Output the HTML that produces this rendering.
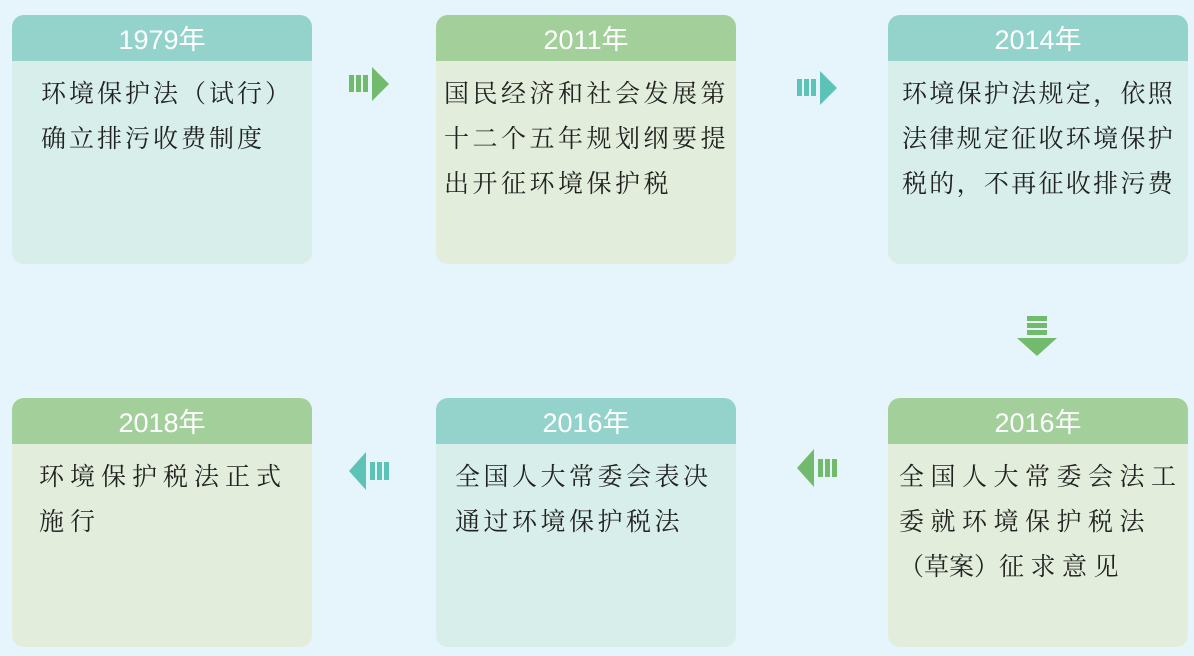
<!DOCTYPE html>
<html><head><meta charset="utf-8"><style>
body{margin:0;width:1194px;height:656px;background:#e6f4fb;position:relative;overflow:hidden;font-family:"Liberation Sans","Noto Sans CJK SC",sans-serif}
.box{position:absolute;width:300px;height:249px;border-radius:12px;overflow:hidden}
.h{height:46px;line-height:50px;text-align:center;color:#fff;font-size:27px}
.b{padding:11px 0 0 29px;font-family:"Liberation Serif","Noto Serif CJK SC",serif;font-size:25px;line-height:45px;color:#222;letter-spacing:3px}
.t .h{background:#93d3cb}.t{background:#d7eeea}
.g .h{background:#a3cf9b}.g{background:#e2eedb}
svg{position:absolute}
</style></head><body>
<div class="box t" style="left:12px;top:15px"><div class="h">1979年</div><div class="b">环境保护法（试行）<br>确立排污收费制度</div></div>
<div class="box g" style="left:436px;top:15px"><div class="h">2011年</div><div class="b" style="padding-left:8px;letter-spacing:3.5px">国民经济和社会发展第<br>十二个五年规划纲要提<br>出开征环境保护税</div></div>
<div class="box t" style="left:888px;top:15px"><div class="h">2014年</div><div class="b" style="padding-left:14px;letter-spacing:2.3px">环境保护法规定，依照<br>法律规定征收环境保护<br>税的，不再征收排污费</div></div>
<div class="box g" style="left:12px;top:398px"><div class="h">2018年</div><div class="b" style="padding-left:27px;letter-spacing:6px">环境保护税法正式<br>施行</div></div>
<div class="box t" style="left:436px;top:398px"><div class="h">2016年</div><div class="b" style="padding-left:19px;letter-spacing:3.5px">全国人大常委会表决<br>通过环境保护税法</div></div>
<div class="box g" style="left:888px;top:398px"><div class="h">2016年</div><div class="b" style="padding-left:11px;letter-spacing:6.5px">全国人大常委会法工<br>委就环境保护税法<br><span style="letter-spacing:0">（草案）</span>征求意见</div></div>
<svg style="left:349px;top:67px" width="42" height="34"><g fill="#72bb6d"><rect x="0" y="8" width="5" height="17"/><rect x="7" y="8" width="5" height="17"/><rect x="14" y="8" width="5" height="17"/><polygon points="23,0 40,17 23,34"/></g></svg>
<svg style="left:797px;top:71px" width="42" height="34"><g fill="#5cc3b6"><rect x="0" y="8" width="5" height="17"/><rect x="7" y="8" width="5" height="17"/><rect x="14" y="8" width="5" height="17"/><polygon points="23,0 40,17 23,34"/></g></svg>
<svg style="left:1017px;top:316px" width="40" height="42"><g fill="#72bb6d"><rect x="10" y="0" width="20" height="5"/><rect x="10" y="7" width="20" height="5"/><rect x="10" y="14" width="20" height="5"/><polygon points="0,22 40,22 20,40"/></g></svg>
<svg style="left:349px;top:452px" width="42" height="38"><g fill="#5cc3b6"><polygon points="17,0 0,19 17,38"/><rect x="21" y="10" width="5" height="18"/><rect x="28" y="10" width="5" height="18"/><rect x="35" y="10" width="5" height="18"/></g></svg>
<svg style="left:797px;top:449px" width="42" height="38"><g fill="#72bb6d"><polygon points="17,0 0,19 17,38"/><rect x="21" y="10" width="5" height="18"/><rect x="28" y="10" width="5" height="18"/><rect x="35" y="10" width="5" height="18"/></g></svg>
</body></html>
